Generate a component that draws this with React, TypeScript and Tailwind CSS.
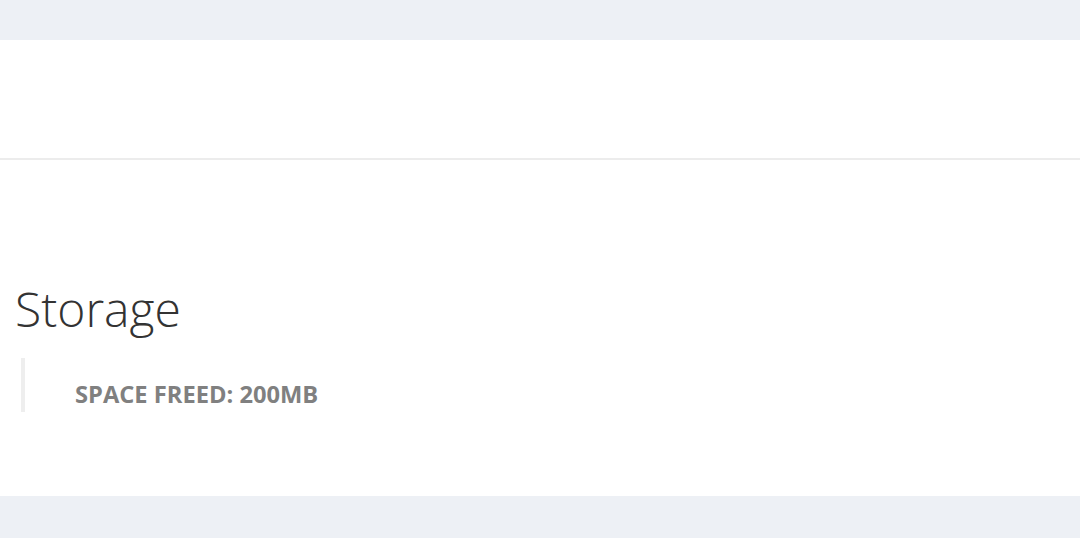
export default function App() {
  return (
    <div className="min-h-[538px] bg-[#edf0f5] font-['Open_Sans',sans-serif]">
      <div className="h-[40px]" />
      <div className="h-[120px] bg-white border-b-2 border-[#ececec]" />
      <section className="bg-white px-[15px] pt-[122px] pb-[84px]">
        <h1 className="text-[48px] leading-[53px] font-light text-[#333333]">Storage</h1>
        <blockquote className="mt-[23px] ml-[6px] border-l-4 border-[#eeeeee] pl-[50px] pt-[20px] pb-[2px]">
          <p className="text-[23.7px] leading-[32px] font-bold uppercase text-[#808080]">Space freed: 200MB</p>
        </blockquote>
      </section>
    </div>
  );
}
